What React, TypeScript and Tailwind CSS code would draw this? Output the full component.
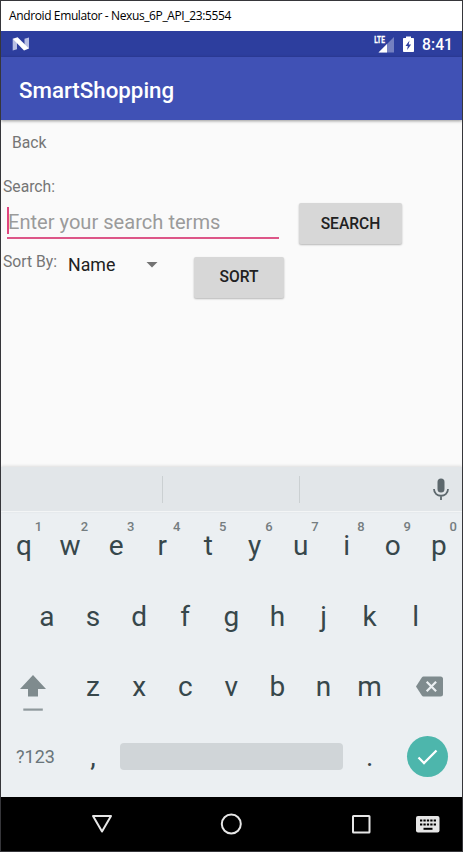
import React from "react";

function Key({ label, hint }: { label: string; hint?: string }) {
  return (
    <div className="relative flex h-full w-[46.1px] shrink-0 items-center justify-center text-[28px] leading-none text-[#37474b]">
      <span>{label}</span>
      {hint && (
        <span className="absolute top-[7px] right-[5px] text-[13px] leading-[15px] font-medium text-[#757d80]">
          {hint}
        </span>
      )}
    </div>
  );
}

function RaisedButton({ label, className }: { label: string; className: string }) {
  return (
    <button
      className={`flex items-center justify-center rounded-[2px] bg-[#d7d7d7] text-[15.600px] leading-none font-medium text-[#212121] shadow-[0_1px_2px_rgba(0,0,0,0.28)] ${className}`}
    >
      {label}
    </button>
  );
}

export default function App() {
  return (
    <div className="flex h-[852px] w-[463px] flex-col overflow-hidden border border-[#36363a] bg-[#fafafa] font-['Roboto',sans-serif]">
      <div className="flex h-[30px] shrink-0 items-center bg-white pl-[8px]">
        <span className="font-['Open_Sans','Noto_Sans',sans-serif] text-[12px] leading-none tracking-[-0.38px] whitespace-nowrap text-black">
          Android Emulator - Nexus_6P_API_23:5554
        </span>
      </div>

      <div className="flex h-[26px] shrink-0 items-center bg-[#2d3e9e] pr-[9px] pl-[11px] text-white">
        <svg width="18" height="14" viewBox="0 0 18 14">
          <path d="M.7 1.8 5 4v8.3L.7 13.5zM12.5 1.8 17 .6v11L12.5 10z" fill="#b8bfe3" />
          <path d="M.7 1.8 5.6.3 17 11.6l-5 2z" fill="#fff" />
        </svg>
        <svg className="ml-auto" width="22" height="18" viewBox="0 0 22 18">
          <path d="M21 2v15.500H5.500z" fill="#7580c0" />
          <path d="M14 9v8.500H5.500z" fill="#fff" />
          <text x="1.300" y="8" fontSize="9" fontWeight="700" fill="#fff" stroke="#fff" strokeWidth="0.300" textLength="10.500" lengthAdjust="spacingAndGlyphs">LTE</text>
        </svg>
        <svg className="ml-[8.500px]" width="11" height="17" viewBox="0 0 11 17">
          <path d="M3 2V.5h5V2h2.2q.8 0 .8.8v12.4q0 .8-.8.8H.8q-.8 0-.8-.8V2.800Q0 2 .8 2z" fill="#fff" />
          <path d="M6.500 4.500 2.500 10h2.300l-.7 4 4-5.500H5.700z" fill="#2d3e9e" />
        </svg>
        <span className="mt-[2px] ml-[8px] text-[15.700px] leading-none font-medium">8:41</span>
      </div>

      <header className="z-10 flex h-[63px] shrink-0 items-center bg-[#4051b5] pt-[3px] pl-[18px] shadow-[0_1px_3px_rgba(0,0,0,0.4)]">
        <h1 className="text-[22.300px] leading-none font-medium text-white">SmartShopping</h1>
      </header>

      <main className="flex h-[347px] shrink-0 flex-col text-[15.700px] leading-[18px] text-[#757575]">
        <div className="pt-[14px] pl-[11px]">Back</div>
        <div className="pt-[26px] pl-[2px]">Search:</div>
        <div className="flex pt-[7px] pl-[6px]">
          <div className="mt-[4px] flex h-[32px] w-[271.500px] items-start border-b-2 border-[#dd5688]">
            <div className="flex h-[27px] items-center border-l-2 border-[#e0457e]">
              <span className="mt-[3px] ml-[-1px] text-[20.100px] leading-none whitespace-nowrap text-[#9b9b9b]">
                Enter your search terms
              </span>
            </div>
          </div>
          <RaisedButton label="SEARCH" className="ml-[20.500px] h-[41px] w-[103px] pt-[2px]" />
        </div>
        <div className="flex pt-[9px] pl-[2px]">
          <span className="w-[65px]">Sort By:</span>
          <span className="mt-[2px] w-[78px] text-[17.800px] leading-[20px] text-[#212121]">Name</span>
          <svg className="mt-[8.500px]" width="12" height="6" viewBox="0 0 12 6">
            <path d="M.5 0h11L6 5.500z" fill="#737373" />
          </svg>
          <RaisedButton label="SORT" className="mt-[4px] ml-[36px] h-[41px] w-[90px]" />
        </div>
      </main>

      <section className="flex h-[330px] shrink-0 flex-col bg-[#ebeff2]">
        <div className="flex h-[45px] shrink-0 items-center border-b border-[#f3f5f6] bg-[#e2e6e9] shadow-[0_-1px_3px_rgba(0,0,0,0.12)]">
          <div className="h-[27px] w-[162px] border-r border-[#cbd0d2]" />
          <div className="h-[27px] w-[137px] border-r border-[#cbd0d2]" />
          <svg className="ml-[132px]" width="18" height="23" viewBox="0 0 18 23">
            <rect x="5.500" y="0.500" width="7" height="14" rx="3.500" fill="#5d686d" />
            <path d="M2 11c0 9 14 9 14 0M9 17.500V22" stroke="#5d686d" strokeWidth="1.800" fill="none" />
          </svg>
        </div>
        <div className="mb-[1.400px] flex h-[68.500px] shrink-0">
          {"qwertyuiop".split("").map((c, i) => (
            <Key key={c} label={c} hint={"1234567890"[i]} />
          ))}
        </div>
        <div className="flex h-[70.4px] shrink-0 pl-[22.900px]">
          {"asdfghjkl".split("").map((c) => (
            <Key key={c} label={c} />
          ))}
        </div>
        <div className="flex h-[70.4px] shrink-0 items-center">
          <div className="flex w-[69px] pl-[19px]">
            <svg className="mt-[13px]" width="26" height="37" viewBox="0 0 26 37">
              <path d="M13 0 26 14h-8v7.500H8V14H0z" fill="#7f8b8e" />
              <path d="M3.300 33.500h19.500v2.200H3.300z" fill="#8f999c" />
            </svg>
          </div>
          {"zxcvbnm".split("").map((c) => (
            <Key key={c} label={c} />
          ))}
          <svg className="ml-[23px] mt-[-1px]" width="27" height="21" viewBox="0 0 27 21">
            <path d="M7.500 .5H24.500Q27 .5 27 3v15q0 2.500-2.500 2.500H7.500Q6.500 20.500 5.800 19.500L0 10.500 5.800 1.500Q6.500.5 7.500.5z" fill="#7f8b8e" />
            <path d="m10.700 5.800 9.400 9.400m0-9.400-9.400 9.400" stroke="#ebeff2" strokeWidth="2.200" />
          </svg>
        </div>
        <div className="flex h-[69.400px] shrink-0 items-center">
          <div className="w-[69px] text-center text-[18px] leading-none text-[#69757a]">?123</div>
          <Key label="," />
          <div className="mt-[-1px] mr-[3.500px] ml-[4px] h-[27px] w-[223px] shrink-0 rounded-[4px] bg-[#d0d5d8]" />
          <Key label="." />
          <div className="mt-[-1px] ml-[14px] flex h-[41px] w-[41px] items-center justify-center rounded-full bg-[#4db6ac]">
            <svg width="21" height="16" viewBox="0 0 21 16">
              <path d="m1.500 8.500 5.500 5.500L19.500 1.500" stroke="#fff" strokeWidth="2.300" fill="none" />
            </svg>
          </div>
        </div>
      </section>

      <nav className="flex h-[54px] shrink-0 items-center bg-black">
        <svg className="ml-[90px]" width="22" height="20" viewBox="0 0 22 20">
          <path d="M2 2h18l-9 15.500z" fill="none" stroke="#e6e6e6" strokeWidth="2" strokeLinejoin="round" />
        </svg>
        <svg className="ml-[107px]" width="22" height="22" viewBox="0 0 22 22">
          <circle cx="11.300" cy="11" r="9.500" fill="none" stroke="#e6e6e6" strokeWidth="2" />
        </svg>
        <svg className="ml-[109px]" width="20" height="20" viewBox="0 0 20 20">
          <rect x="2" y="2" width="16.500" height="16.500" rx="0.500" fill="none" stroke="#e6e6e6" strokeWidth="2" />
        </svg>
        <svg className="ml-[45px]" width="24" height="17" viewBox="0 0 24 17">
          <rect width="23.500" height="16.500" rx="2" fill="#e6e6e6" />
          <path d="M4 4.500h16M4 8.500h16" stroke="#000" strokeWidth="2.200" strokeDasharray="2.300 1.120" />
          <path d="M7.500 12.800h9" stroke="#000" strokeWidth="2" />
        </svg>
      </nav>
    </div>
  );
}
